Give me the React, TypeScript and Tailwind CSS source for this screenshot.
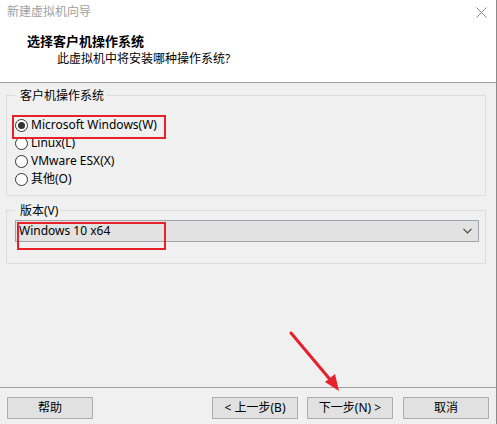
import React from 'react'

const FONT = { fontFamily: '"Noto Sans", "Noto Sans CJK SC", sans-serif' }

function Radio({ label, checked }: { label: string; checked?: boolean }) {
  return (
    <div className="flex items-center h-[18px] text-[12px] text-black">
      <span className="w-[13px] h-[13px] rounded-full border border-[#333] bg-white flex items-center justify-center mr-[3px]">
        {checked && <span className="w-[7px] h-[7px] rounded-full bg-[#333]" />}
      </span>
      <span>{label}</span>
    </div>
  )
}

function Btn({ children, className = '' }: { children: React.ReactNode; className?: string }) {
  return (
    <div className={`h-[22px] w-[86px] bg-[#e1e1e1] border border-[#adadad] flex items-center justify-center text-[12px] text-black ${className}`}>
      {children}
    </div>
  )
}

export default function App() {
  return (
    <div style={FONT} className="relative w-[497px] h-[424px] bg-[#f0f0f0] border-r border-[#8a8a8a] flex flex-col overflow-hidden">
      {/* header */}
      <div className="h-[83px] bg-white border-b border-[#a0a0a0] shrink-0">
        <div className="flex items-center justify-between h-[24px] pl-[7px] pr-[9px]">
          <span className="text-[12px] text-[#a0a0a0]">新建虚拟机向导</span>
          <svg width="11" height="11" viewBox="0 0 11 11">
            <path d="M0.5 0.5L10.5 10.5M10.5 0.5L0.5 10.5" stroke="#8a8a8a" strokeWidth="1" />
          </svg>
        </div>
        <div className="pl-[27px] pt-[8px] text-[13px] font-bold text-black leading-[18px]">选择客户机操作系统</div>
        <div className="pl-[57px] text-[12px] text-black leading-[18px]">此虚拟机中将安装哪种操作系统?</div>
      </div>

      {/* body */}
      <div className="flex-1 flex flex-col pl-[6px] pr-[10px] pt-[12px]">
        <div className="border border-[#dcdcdc] h-[101px] px-[8px]">
          <div className="-mt-[8px] pl-[5px] w-fit text-[12px] leading-[16px] bg-[#f0f0f0] px-[2px]">客户机操作系统</div>
          <div className="mt-[12px] flex flex-col">
            <Radio label="Microsoft Windows(W)" checked />
            <Radio label="Linux(L)" />
            <Radio label="VMware ESX(X)" />
            <Radio label="其他(O)" />
          </div>
        </div>

        <div className="border border-[#dcdcdc] h-[54px] mt-[14px] pl-[8px] pr-[6px]">
          <div className="-mt-[8px] pl-[5px] w-fit text-[12px] leading-[16px] bg-[#f0f0f0] px-[2px]">版本(V)</div>
          <div className="mt-[1px] h-[22px] bg-[#e1e2e1] border border-[#a0a4a8] flex items-center justify-between pl-[3px] pr-[6px] text-[12px] text-black">
            <span>Windows 10 x64</span>
            <svg width="9" height="6" viewBox="0 0 9 6">
              <path d="M0.5 0.8L4.5 4.8L8.5 0.8" stroke="#444" strokeWidth="1.2" fill="none" />
            </svg>
          </div>
        </div>
      </div>

      {/* footer */}
      <div className="h-[37px] border-t border-[#a0a0a0] shrink-0 flex items-start pt-[9px] pl-[7px]">
        <Btn>帮助</Btn>
        <Btn className="ml-[119px]">&lt; 上一步(B)</Btn>
        <Btn className="ml-[9px]">下一步(N) &gt;</Btn>
        <Btn className="ml-[10px]">取消</Btn>
      </div>

      {/* annotations */}
      <div className="absolute left-[12px] top-[115px] w-[154px] h-[24px] border-2 border-[#e8202a]" />
      <div className="absolute left-[17px] top-[222px] w-[149px] h-[28px] border-2 border-[#e8202a]" />
      <svg className="absolute left-0 top-0 pointer-events-none" width="497" height="424">
        <line x1="291" y1="333" x2="333" y2="383" stroke="#e8202a" strokeWidth="3" strokeLinecap="round" />
        <polygon points="339,391 325,382 335,374" fill="#e8202a" />
      </svg>
    </div>
  )
}
